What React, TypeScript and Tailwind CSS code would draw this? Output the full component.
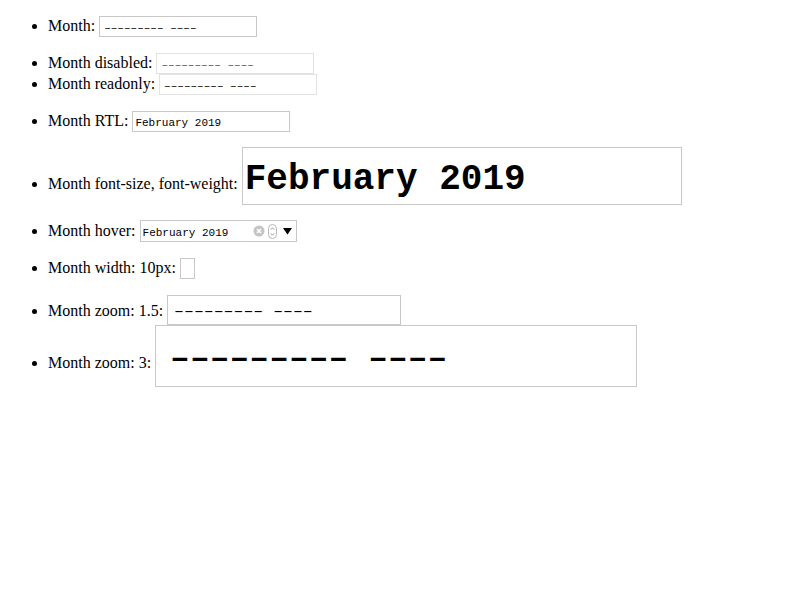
const mono = "font-['Liberation_Mono',monospace]";

function Dashes({ className = 'pt-[4px]' }: { className?: string }) {
  return <span className={`whitespace-pre ${className}`}>{'––––––––– ––––'}</span>;
}

function Box({
  className,
  children,
}: {
  className: string;
  children?: React.ReactNode;
}) {
  return (
    <span
      className={`inline-flex items-center border border-solid bg-white align-baseline ${mono} ${className}`}
    >
      {children}
    </span>
  );
}

function HoverControls() {
  return (
    <span className="ml-auto flex items-center gap-[3px] pr-[3px]">
      <svg width="12" height="12" viewBox="0 0 12 12" aria-hidden="true">
        <circle cx="6" cy="6" r="5.5" fill="#c4c4c4" />
        <path d="M4 4 L8 8 M8 4 L4 8" stroke="#fff" strokeWidth="1.6" />
      </svg>
      <svg width="9" height="15" viewBox="0 0 9 15" aria-hidden="true">
        <rect x="0.5" y="0.5" width="8" height="14" rx="4" fill="#fff" stroke="#b8b8b8" />
        <path d="M2.8 5.6 L4.5 3.8 L6.2 5.6" fill="none" stroke="#888" strokeWidth="0.9" />
        <path d="M2.8 9.4 L4.5 11.2 L6.2 9.4" fill="none" stroke="#888" strokeWidth="0.9" />
      </svg>
      <svg width="11" height="10" viewBox="0 0 11 10" className="ml-[2px]" aria-hidden="true">
        <path d="M1 2 L10 2 L5.5 8.5 Z" fill="#000" />
      </svg>
    </span>
  );
}

export default function App() {
  return (
    <div className="min-h-[600px] w-[800px] bg-white text-black">
      <ul className="my-4 list-disc pl-12 font-['Liberation_Serif',serif] text-base leading-none">
        <li>
          Month:{' '}
          <Box className="h-[21px] w-[158px] border-[#c8c8c8] pl-[4px] text-[11px]">
            <Dashes />
          </Box>
        </li>
        <li className="mt-4">
          Month disabled:{' '}
          <Box className="h-[21px] w-[158px] border-[#e2e2e2] pl-[4px] text-[11px] text-[#545454]">
            <Dashes />
          </Box>
        </li>
        <li>
          Month readonly:{' '}
          <Box className="h-[21px] w-[158px] border-[#e2e2e2] pl-[4px] text-[11px]">
            <Dashes />
          </Box>
        </li>
        <li className="mt-4">
          Month RTL:{' '}
          <Box className="h-[21px] w-[158px] border-[#c8c8c8] pl-[2px] text-[11px]">
            <span className="whitespace-pre pt-[4px]">February 2019</span>
          </Box>
        </li>
        <li className="mt-[15px]">
          Month font-size, font-weight:{' '}
          <Box className="h-[58px] w-[440px] border-[#c8c8c8] pl-[2px] pt-[8px] text-[36px] font-bold">
            <span className="whitespace-pre">February 2019</span>
          </Box>
        </li>
        <li className="mt-[15px]">
          Month hover:{' '}
          <Box className="h-[22px] w-[157px] border-[#c8c8c8] pl-[2px] text-[11px]">
            <span className="whitespace-pre pt-[4px]">February 2019</span>
            <HoverControls />
          </Box>
        </li>
        <li className="mt-4">
          Month width: 10px:{' '}
          <Box className="h-[21px] w-[15px] border-[#c8c8c8]">
            <span className="pt-[4px] text-[11px]">{'\u00a0'}</span>
          </Box>
        </li>
        <li className="mt-4">
          Month zoom: 1.5:{' '}
          <Box className="h-[30px] w-[234px] border-[#c8c8c8] pl-[6px] text-[16.5px]">
            <Dashes />
          </Box>
        </li>
        <li>
          Month zoom: 3:{' '}
          <Box className="h-[62px] w-[482px] border-[#c8c8c8] pl-[14px] text-[33px] font-bold">
            <Dashes className="pt-[6px]" />
          </Box>
        </li>
      </ul>
    </div>
  );
}
